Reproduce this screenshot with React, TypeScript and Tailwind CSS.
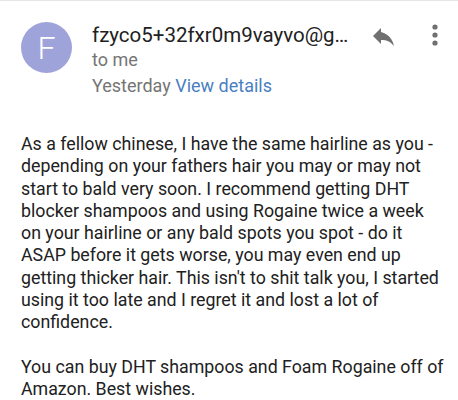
const lines = [
  'As a fellow chinese, I have the same hairline as you -',
  'depending on your fathers hair you may or may not',
  'start to bald very soon. I recommend getting DHT',
  'blocker shampoos and using Rogaine twice a week',
  'on your hairline or any bald spots you spot - do it',
  'ASAP before it gets worse, you may even end up',
  "getting thicker hair. This isn't to shit talk you, I started",
  'using it too late and I regret it and lost a lot of',
  'confidence.',
];

export default function App() {
  return (
    <div className="w-[458px] h-[400px] bg-white overflow-hidden border-t border-[#e6e6e6]" style={{ fontFamily: 'Roboto, "Liberation Sans", sans-serif' }}>
      <div className="flex items-start pl-[21px] pt-[21px]">
        <div className="w-[51px] h-[51px] rounded-full bg-[#9ea4d9] flex items-center justify-center text-white text-[32px] font-light shrink-0">
          F
        </div>
        <div className="ml-[20px] flex-1 min-w-0">
          <div className="flex items-start">
            <div className="text-[20.5px] leading-[26px] text-[#212121] w-[262px] whitespace-nowrap">
              fzyco5+32fxr0m9vayvo@g…
            </div>
            <svg className="ml-[18px] mt-[6px]" width="24" height="18" viewBox="0 0 24 18">
              <path d="M9 4V0L1 8l8 8v-4.1c6 0 10 1.9 13 6.1-1.2-6-5-12-13-14z" fill="#707070" />
            </svg>
            <svg className="ml-[36px] mt-[2px]" width="6" height="22" viewBox="0 0 6 22">
              <circle cx="3" cy="3" r="2.6" fill="#707070" />
              <circle cx="3" cy="11" r="2.6" fill="#707070" />
              <circle cx="3" cy="19" r="2.6" fill="#707070" />
            </svg>
          </div>
          <div className="text-[18px] leading-[22px] text-[#757575] mt-[1px]">to me</div>
          <div className="text-[18px] leading-[22px] text-[#757575] mt-[4px]">
            Yesterday <span className="text-[#4a7fc1]">View details</span>
          </div>
        </div>
      </div>
      <div className="pl-[21px] pt-[36px] text-[17.8px] leading-[22.25px] text-[#212121] whitespace-nowrap">
        <p>
          {lines.map((l, i) => (
            <span key={i} className="block">{l}</span>
          ))}
        </p>
        <p className="mt-[22.25px]">
          <span className="block">You can buy DHT shampoos and Foam Rogaine off of</span>
          <span className="block">Amazon. Best wishes.</span>
        </p>
      </div>
    </div>
  );
}
